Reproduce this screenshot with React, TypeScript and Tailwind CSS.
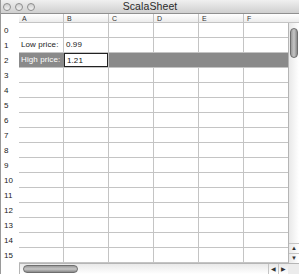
const COLS = ["A", "B", "C", "D", "E", "F"];
const ROWS = Array.from({ length: 16 }, (_, i) => i);

function Light() {
  return (
    <span className="block h-[8px] w-[8px] rounded-full border border-[#8d8d8d] bg-gradient-to-b from-[#cfcfcf] to-[#f2f2f2]" />
  );
}

function Cell({ row, col }: { row: number; col: number }) {
  const selected = row === 2;
  if (selected && col === 1) {
    return (
      <div className="w-[45px] shrink-0 border-r border-[#c4c4c4] bg-white">
        <div className="h-full border border-[#222] pl-[2px] text-[#111] leading-[13px]">1.21</div>
      </div>
    );
  }
  let text = "";
  if (row === 1 && col === 0) text = "Low price:";
  if (row === 1 && col === 1) text = "0.99";
  if (row === 2 && col === 0) text = "High price:";
  return (
    <div
      className={
        "w-[45px] shrink-0 border-r pl-[2px] leading-[14px] " +
        (selected ? "border-[#8a8a8a] bg-[#8a8a8a] text-white" : "border-[#c4c4c4] text-[#222]")
      }
    >
      {text}
    </div>
  );
}

export default function App() {
  return (
    <div className="flex h-[274px] w-[299px] flex-col overflow-hidden border-l border-[#9a9a9a] bg-white text-[8px] tracking-[0.1px] [font-family:'Liberation_Sans',Arial,sans-serif]">
      {/* title bar */}
      <div className="relative flex h-[14px] shrink-0 items-center border-b border-[#8f8f8f] bg-gradient-to-b from-[#f0f0f0] to-[#cfcfcf]">
        <div className="flex gap-[4px] pl-[2px]">
          <Light />
          <Light />
          <Light />
        </div>
        <div className="absolute inset-0 flex items-center justify-center text-[10.5px] text-[#2a2a2a]">ScalaSheet</div>
      </div>

      <div className="flex min-h-0 flex-1">
        {/* grid */}
        <div className="flex min-w-0 flex-1 flex-col overflow-hidden">
          <div className="flex h-[9px] shrink-0">
            <div className="w-[18px] shrink-0" />
            {COLS.map((c) => (
              <div
                key={c}
                className="w-[45px] shrink-0 border-r border-b border-[#c4c4c4] bg-gradient-to-b from-white to-[#ececec] pl-[3px] text-[7px] leading-[9px] text-[#333]"
              >
                {c}
              </div>
            ))}
          </div>
          {ROWS.map((r) => (
            <div key={r} className="flex h-[15px] shrink-0">
              <div className="w-[18px] shrink-0 pl-[3px] pt-[2px] leading-[12px] text-[#222]">{r}</div>
              <div className="flex border-b border-[#c4c4c4]">
                {COLS.map((c, i) => (
                  <Cell key={c} row={r} col={i} />
                ))}
              </div>
            </div>
          ))}
          {/* horizontal scrollbar */}
          <div className="flex h-[11px] shrink-0">
            <div className="w-[18px] shrink-0" />
            <div className="flex flex-1 items-center border-t border-l border-[#b5b5b5] bg-gradient-to-b from-[#e9e9e9] to-white">
              <div className="ml-[3px] h-[8px] w-[55px] rounded-full border border-[#6e6e6e] bg-gradient-to-b from-[#9a9a9a] via-[#c6c6c6] to-[#8a8a8a]" />
              <div className="ml-auto flex h-full">
                <div className="flex w-[10px] items-center justify-center border-l border-[#c4c4c4] text-[6px] text-[#333]">◀</div>
                <div className="flex w-[10px] items-center justify-center border-l border-[#c4c4c4] text-[6px] text-[#333]">▶</div>
              </div>
            </div>
          </div>
        </div>

        {/* vertical scrollbar */}
        <div className="flex w-[11px] shrink-0 flex-col">
          <div className="h-[9px] shrink-0 border-b border-[#c4c4c4] bg-gradient-to-b from-white to-[#ececec]" />
          <div className="flex flex-1 flex-col items-center border-l border-[#b5b5b5] bg-gradient-to-r from-[#e9e9e9] to-white">
            <div className="mt-[5px] h-[30px] w-[8px] rounded-full border border-[#6e6e6e] bg-gradient-to-r from-[#9a9a9a] via-[#c6c6c6] to-[#8a8a8a]" />
            <div className="mt-auto flex w-full flex-col">
              <div className="flex h-[10px] items-center justify-center border-t border-[#c4c4c4] text-[6px] text-[#333]">▲</div>
              <div className="flex h-[10px] items-center justify-center border-t border-[#c4c4c4] text-[6px] text-[#333]">▼</div>
            </div>
          </div>
          <div className="h-[11px] shrink-0 border-t border-[#b5b5b5] bg-[#ececec]" />
        </div>
      </div>
    </div>
  );
}
